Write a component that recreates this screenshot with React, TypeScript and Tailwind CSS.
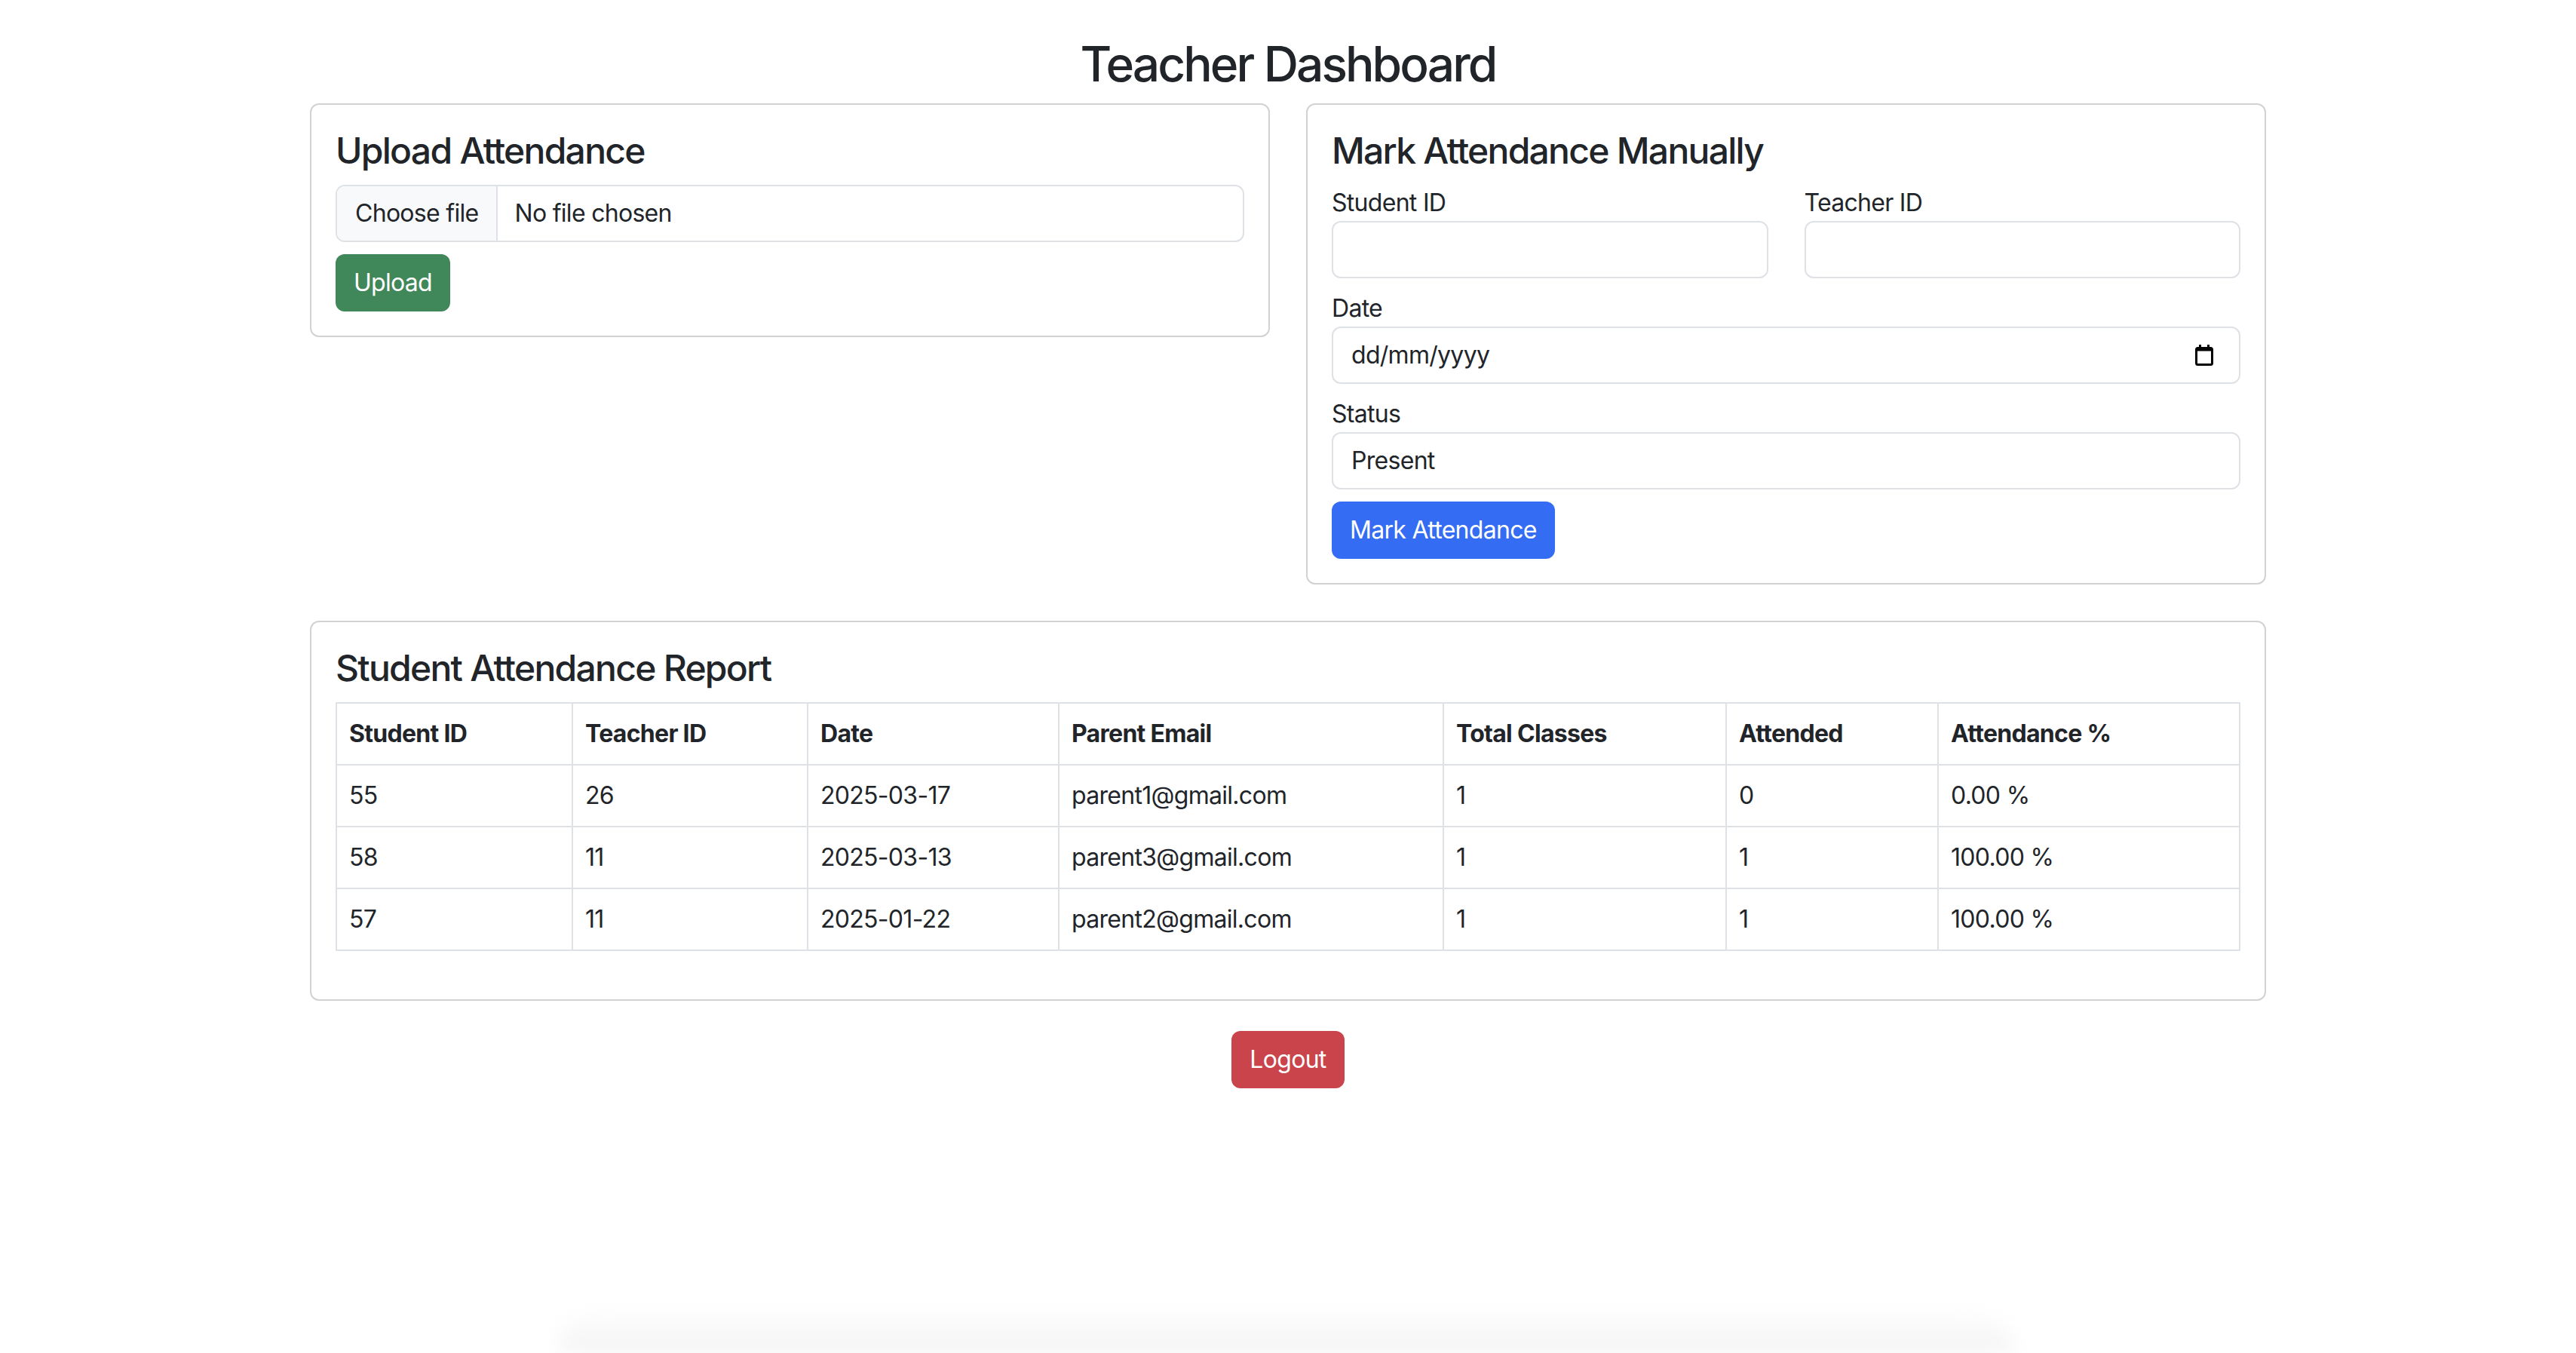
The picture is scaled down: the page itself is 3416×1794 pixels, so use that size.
import React from "react";

const rows = [
  { student: "55", teacher: "26", date: "2025-03-17", email: "parent1@gmail.com", total: "1", attended: "0", pct: "0.00 %" },
  { student: "58", teacher: "11", date: "2025-03-13", email: "parent3@gmail.com", total: "1", attended: "1", pct: "100.00 %" },
  { student: "57", teacher: "11", date: "2025-01-22", email: "parent2@gmail.com", total: "1", attended: "1", pct: "100.00 %" },
];

function CalendarIcon() {
  return (
    <svg width="24" height="28" viewBox="0 0 24 28" fill="none">
      <rect x="5" y="0" width="3" height="5" fill="#000" />
      <rect x="16" y="0" width="3" height="5" fill="#000" />
      <rect x="1.5" y="4.5" width="21" height="22" rx="2" stroke="#000" strokeWidth="3" />
      <rect x="1.5" y="4.5" width="21" height="4" fill="#000" />
    </svg>
  );
}

function Field({ label, children }: { label: string; children: React.ReactNode }) {
  return (
    <div className="mb-[16px]">
      <label className="block leading-[48px]">{label}</label>
      {children}
    </div>
  );
}

export default function App() {
  return (
    <div className="relative min-h-[1794px] bg-white text-[#212529] font-['Inter','Liberation_Sans',sans-serif] text-[32px] leading-[48px] tracking-[-0.022em]">
      <div className="mx-auto w-[2594px] pt-[46px]">
        <h1 className="text-center text-[64px] leading-[77px] font-medium tracking-[-0.045em] mb-[14px]">Teacher Dashboard</h1>

        <div className="grid grid-cols-2 gap-x-[48px] items-start">
          {/* upload card */}
          <div className="rounded-[12px] border-2 border-[#d2d2d2] p-[32px]">
            <h4 className="text-[48px] leading-[58px] font-medium tracking-[-0.036em] mb-[16px]">Upload Attendance</h4>
            <div className="flex h-[76px] border-2 border-[#dee2e6] rounded-[12px] overflow-hidden mb-[16px]">
              <div className="flex items-center bg-[#f8f9fa] border-r-2 border-[#dee2e6] px-[24px]">Choose file</div>
              <div className="flex items-center px-[22px]">No file chosen</div>
            </div>
            <button className="h-[76px] px-[24px] rounded-[12px] bg-[#408759] text-white">Upload</button>
          </div>

          {/* manual card */}
          <div className="rounded-[12px] border-2 border-[#d2d2d2] p-[32px]">
            <h4 className="text-[48px] leading-[58px] font-medium tracking-[-0.036em] mb-[16px]">Mark Attendance Manually</h4>
            <div className="grid grid-cols-2 gap-x-[48px]">
              <Field label="Student ID">
                <div className="h-[76px] border-2 border-[#dee2e6] rounded-[12px]" />
              </Field>
              <Field label="Teacher ID">
                <div className="h-[76px] border-2 border-[#dee2e6] rounded-[12px]" />
              </Field>
            </div>
            <Field label="Date">
              <div className="flex items-center justify-between h-[76px] border-2 border-[#dee2e6] rounded-[12px] pl-[24px] pr-[34px]">
                <span>dd/mm/yyyy</span>
                <CalendarIcon />
              </div>
            </Field>
            <Field label="Status">
              <div className="flex items-center h-[76px] border-2 border-[#dee2e6] rounded-[12px] px-[24px]">Present</div>
            </Field>
            <button className="h-[76px] px-[24px] rounded-[12px] bg-[#356cf4] text-white">Mark Attendance</button>
          </div>
        </div>

        {/* report */}
        <div className="mt-[48px] rounded-[12px] border-2 border-[#d2d2d2] p-[32px]">
          <h4 className="text-[48px] leading-[58px] font-medium tracking-[-0.036em] mb-[16px]">Student Attendance Report</h4>
          <table className="w-full table-fixed border-collapse mb-[32px]">
            <colgroup>
              <col className="w-[313px]" />
              <col className="w-[312px]" />
              <col className="w-[333px]" />
              <col className="w-[510px]" />
              <col className="w-[375px]" />
              <col className="w-[281px]" />
              <col />
            </colgroup>
            <thead>
              <tr>
                {["Student ID", "Teacher ID", "Date", "Parent Email", "Total Classes", "Attended", "Attendance %"].map((h) => (
                  <th key={h} className="border-2 border-[#dee2e6] px-[16px] py-[16px] text-left font-bold">{h}</th>
                ))}
              </tr>
            </thead>
            <tbody>
              {rows.map((r) => (
                <tr key={r.student}>
                  <td className="border-2 border-[#dee2e6] px-[16px] py-[16px]">{r.student}</td>
                  <td className="border-2 border-[#dee2e6] px-[16px] py-[16px]">{r.teacher}</td>
                  <td className="border-2 border-[#dee2e6] px-[16px] py-[16px]">{r.date}</td>
                  <td className="border-2 border-[#dee2e6] px-[16px] py-[16px]">{r.email}</td>
                  <td className="border-2 border-[#dee2e6] px-[16px] py-[16px]">{r.total}</td>
                  <td className="border-2 border-[#dee2e6] px-[16px] py-[16px]">{r.attended}</td>
                  <td className="border-2 border-[#dee2e6] px-[16px] py-[16px]">{r.pct}</td>
                </tr>
              ))}
            </tbody>
          </table>
        </div>

        <div className="mt-[40px] flex justify-center">
          <button className="h-[76px] px-[24px] rounded-[12px] bg-[#ca444b] text-white">Logout</button>
        </div>
      </div>

      {/* faint shadow at bottom edge */}
      <div className="absolute bottom-0 left-[740px] w-[1930px] h-[60px] rounded-t-[60px] bg-gradient-to-b from-white to-[#f3f3f3] blur-[12px]" />
    </div>
  );
}
